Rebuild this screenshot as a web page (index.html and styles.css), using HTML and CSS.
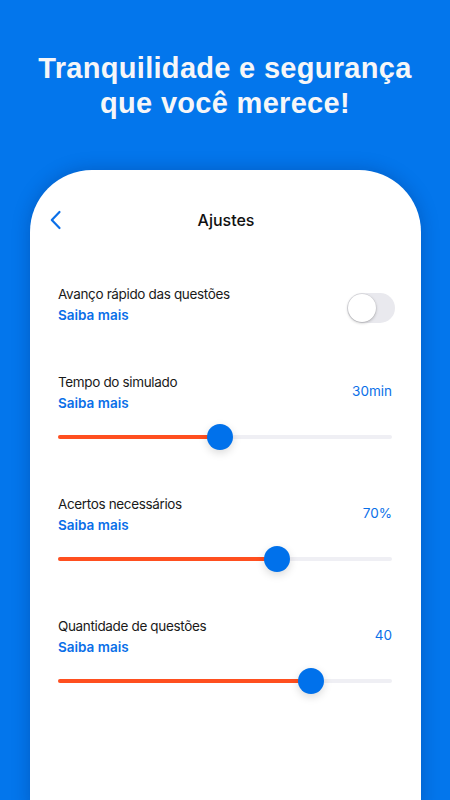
FILE: index.html
```html
<!DOCTYPE html>
<html lang="pt">
<head>
<meta charset="utf-8">
<link rel="stylesheet" href="styles.css">
</head>
<body>
<div class="hero">
  <h1 class="headline">Tranquilidade e segurança<br>que você merece!</h1>
</div>
<div class="card">
  <div class="topbar">
    <svg class="back" width="12" height="20" viewBox="0 0 12 20"><path d="M9.5 2 L1.8 10 L9.5 18" fill="none" stroke="#0A6FE8" stroke-width="2.2" stroke-linecap="round" stroke-linejoin="round"/></svg>
    <div class="topbar-title">Ajustes</div>
  </div>

  <div class="setting toggle-setting">
    <div class="info">
      <div class="label">Avanço rápido das questões</div>
      <div class="link">Saiba mais</div>
    </div>
    <div class="switch"><div class="knob"></div></div>
  </div>

  <div class="setting slider-setting">
    <div class="row">
      <div class="info">
        <div class="label">Tempo do simulado</div>
        <div class="link">Saiba mais</div>
      </div>
      <div class="value">30min</div>
    </div>
    <div class="slider">
      <div class="track"><div class="fill" style="width:162px"></div></div>
      <div class="thumb" style="left:149px"></div>
    </div>
  </div>

  <div class="setting slider-setting">
    <div class="row">
      <div class="info">
        <div class="label">Acertos necessários</div>
        <div class="link">Saiba mais</div>
      </div>
      <div class="value">70%</div>
    </div>
    <div class="slider">
      <div class="track"><div class="fill" style="width:219px"></div></div>
      <div class="thumb" style="left:206px"></div>
    </div>
  </div>

  <div class="setting slider-setting">
    <div class="row">
      <div class="info">
        <div class="label">Quantidade de questões</div>
        <div class="link">Saiba mais</div>
      </div>
      <div class="value">40</div>
    </div>
    <div class="slider">
      <div class="track"><div class="fill" style="width:253px"></div></div>
      <div class="thumb" style="left:240px"></div>
    </div>
  </div>
</div>
</body>
</html>
```

FILE: styles.css
```css
html, body {
  margin: 0;
  padding: 0;
}
body {
  width: 450px;
  height: 800px;
  overflow: hidden;
  background: #0376EC;
  font-family: "Liberation Sans", Arial, sans-serif;
}
.hero {
  height: 170px;
  box-sizing: border-box;
  padding-top: 51px;
}
.headline {
  margin: 0;
  text-align: center;
  color: #F6F6F8;
  font-family: "Liberation Sans", Arial, sans-serif;
  font-weight: 700;
  font-size: 29px;
  line-height: 35px;
  letter-spacing: 0.3px;
}
.card {
  margin-left: 30px;
  width: 391px;
  height: 640px;
  background: #fff;
  border-radius: 62px 62px 0 0;
  box-shadow: 0 0 18px rgba(0, 30, 90, 0.28);
  box-sizing: border-box;
  padding: 0 29px 0 28px;
}
.topbar {
  position: relative;
  height: 100px;
  display: flex;
  align-items: center;
  justify-content: center;
}
.back {
  position: absolute;
  left: -8px;
  top: 40px;
}
.topbar-title {
  font-family: "Inter", "Liberation Sans", sans-serif;
  font-size: 16px;
  font-weight: 500;
  color: #111;
  margin-left: 2px;
}
.setting {
  font-family: "Inter", "Liberation Sans", sans-serif;
}
.toggle-setting {
  margin-top: 14px;
  display: flex;
  justify-content: space-between;
  align-items: flex-start;
  margin-bottom: 46px;
}
.label {
  font-size: 13.5px;
  line-height: 20px;
  letter-spacing: -0.35px;
  color: #1a1a1a;
}
.link {
  font-size: 13.5px;
  line-height: 21px;
  padding-top: 1px;
  font-weight: 600;
  color: #0A6FE8;
}
.switch {
  width: 48px;
  height: 30px;
  border-radius: 15px;
  background: #E9E9EE;
  position: relative;
  margin-right: -3px;
  margin-top: 9px;
}
.knob {
  position: absolute;
  left: 1px;
  top: 1px;
  width: 28px;
  height: 28px;
  border-radius: 50%;
  background: #fff;
  box-shadow: 0 1px 3px rgba(0, 0, 0, 0.25), 0 0 0 0.5px rgba(0,0,0,0.08);
}
.row {
  display: flex;
  justify-content: space-between;
  align-items: center;
}
.value {
  font-size: 13.5px;
  color: #0A6FE8;
  padding-bottom: 5px;
}
.slider {
  position: relative;
  height: 26px;
  margin-top: 10px;
  margin-bottom: 44px;
  display: flex;
  align-items: center;
}
.track {
  width: 100%;
  height: 4px;
  border-radius: 2px;
  background: #EFEFF4;
  overflow: hidden;
}
.fill {
  height: 100%;
  background: #FF4F1F;
}
.thumb {
  position: absolute;
  top: 0;
  width: 26px;
  height: 26px;
  border-radius: 50%;
  background: #0071EB;
  box-shadow: 0 3px 8px rgba(0, 0, 0, 0.15);
}
```
